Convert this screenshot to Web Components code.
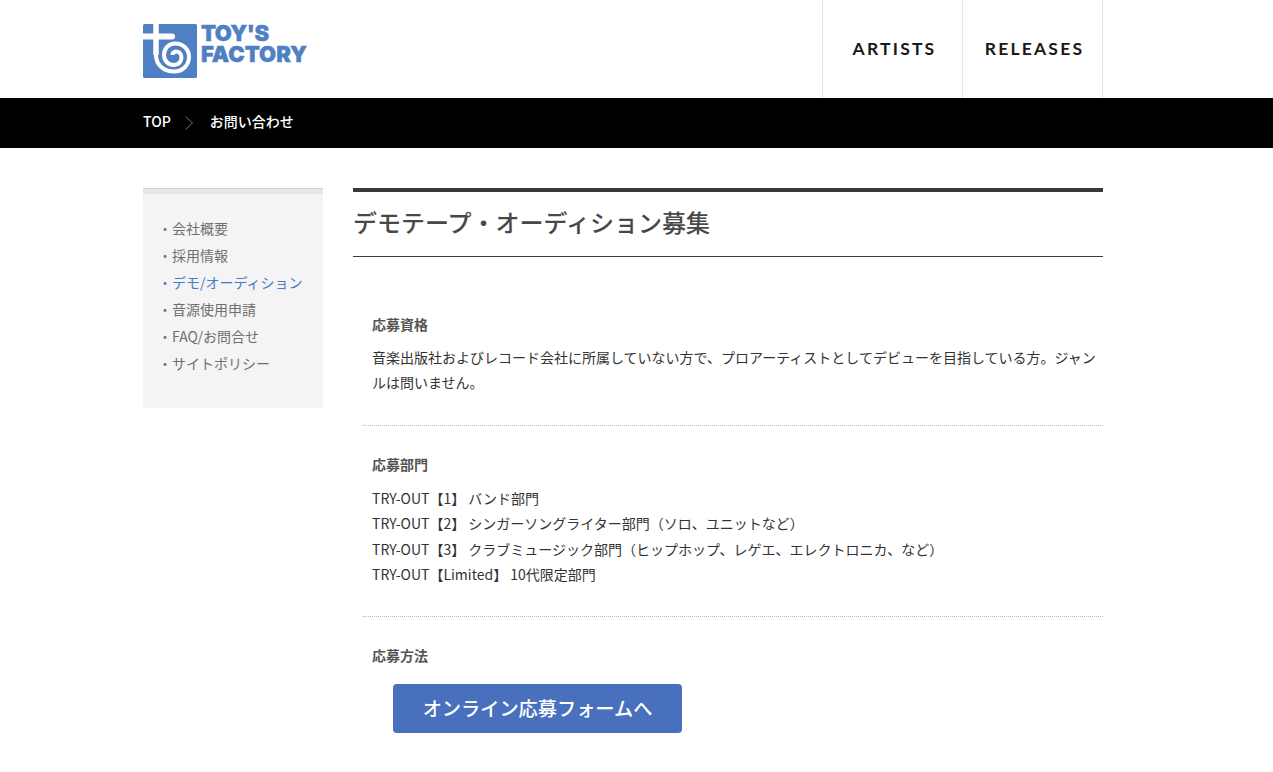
<!DOCTYPE html>
<html lang="ja">
<head>
<meta charset="utf-8">
<title>デモテープ・オーディション募集</title>
<style>
  html, body { margin: 0; padding: 0; background: #fff; }
  body { font-family: "Noto Sans CJK JP", "Noto Sans", sans-serif; color: #333; overflow: hidden; }
</style>
</head>
<body>
<site-header></site-header>
<bread-crumb current="お問い合わせ"></bread-crumb>
<page-body>
  <side-menu slot="side"></side-menu>
  <div slot="main">
    <page-title>デモテープ・オーディション募集</page-title>
    <info-block heading="応募資格" first>
      音楽出版社およびレコード会社に所属していない方で、プロアーティストとしてデビューを目指している方。ジャンルは問いません。
    </info-block>
    <info-block heading="応募部門">
      TRY-OUT【1】 バンド部門<br>
      TRY-OUT【2】 シンガーソングライター部門（ソロ、ユニットなど）<br>
      TRY-OUT【3】 クラブミュージック部門（ヒップホップ、レゲエ、エレクトロニカ、など）<br>
      TRY-OUT【Limited】 10代限定部門
    </info-block>
    <info-block heading="応募方法" last>
      <form-button>オンライン応募フォームへ</form-button>
    </info-block>
  </div>
</page-body>

<script>
class SiteHeader extends HTMLElement {
  constructor() {
    super();
    this.attachShadow({ mode: 'open' });
    this.shadowRoot.innerHTML = `
      <style>
        :host { display: block; height: 98px; background: #fff; }
        .inner { width: 960px; height: 98px; margin-left: 143px; display: flex; align-items: stretch; justify-content: space-between; }
        .logo { display: flex; align-items: flex-start; gap: 4px; padding-top: 24px; text-decoration: none; }
        .logo svg { display: block; }
        .word { display: flex; flex-direction: column; gap: 1px; margin-top: -1px; }
        .word span { display: block; font: 900 22px/20px "Inter", sans-serif; color: #5080c4; -webkit-text-stroke: .4px #5080c4; }
        .word span:first-child { letter-spacing: -.5px; }
        nav { display: flex; }
        a.item { box-sizing: border-box; width: 140px; padding: 0 0 2px 4px; display: flex; align-items: center; justify-content: center; border-left: 1px solid #e4e4e4; font: 700 17.5px "Lato", sans-serif; letter-spacing: 2.2px; color: #1a1a1a; text-decoration: none; }
        a.item:last-child { width: 141px; border-right: 1px solid #e4e4e4; }
      </style>
      <div class="inner">
        <a class="logo" href="#">
          <svg width="54" height="54" viewBox="0 0 54 54">
            <rect width="54" height="54" rx="1.5" fill="#5080c4"/>
            <path d="M0 12.5H29" fill="none" stroke="#fff" stroke-width="6" stroke-linecap="round"/>
            <path d="M13 0V31" fill="none" stroke="#fff" stroke-width="5.5"/>
            <path d="M13 31C13 41 21 47.5 31 47.5C40 47.5 46 41 46 33C46 25 40 19.5 32 19.5C25.5 19.5 21 24.5 21 31C21 37 25.5 41 31 41C35.5 41 38.5 37.5 38.5 33.5C38.5 30 36 27.5 33 27.5C31 27.5 29.5 29 29.5 31" fill="none" stroke="#fff" stroke-width="4"/>
          </svg>
          <span class="word"><span>TOY'S</span><span>FACTORY</span></span>
        </a>
        <nav>
          <a class="item" href="#">ARTISTS</a>
          <a class="item" href="#">RELEASES</a>
        </nav>
      </div>`;
  }
}

class BreadCrumb extends HTMLElement {
  constructor() {
    super();
    this.attachShadow({ mode: 'open' });
    this.shadowRoot.innerHTML = `
      <style>
        :host { display: block; height: 50px; background: #000; }
        .inner { width: 960px; height: 46px; margin-left: 143px; display: flex; align-items: center; font-size: 14px; font-weight: 500; color: #fff; }
        svg { display: block; margin: 4px 16px 0 13px; }
      </style>
      <div class="inner">
        <span>TOP</span>
        <svg width="10" height="14" viewBox="0 0 10 14"><path d="M1.5 .5L8.5 7L1.5 13.5" fill="none" stroke="#777" stroke-width="1"/></svg>
        <span id="current"></span>
      </div>`;
  }
  connectedCallback() {
    this.shadowRoot.querySelector('#current').textContent = this.getAttribute('current');
  }
}

class PageBody extends HTMLElement {
  constructor() {
    super();
    this.attachShadow({ mode: 'open' });
    this.shadowRoot.innerHTML = `
      <style>
        :host { display: block; }
        .inner { width: 960px; margin-left: 143px; padding-top: 40px; display: grid; grid-template-columns: 180px 750px; column-gap: 30px; align-items: start; }
      </style>
      <div class="inner">
        <slot name="side"></slot>
        <slot name="main"></slot>
      </div>`;
  }
}

class SideMenu extends HTMLElement {
  constructor() {
    super();
    const items = ['会社概要', '採用情報', 'デモ/オーディション', '音源使用申請', 'FAQ/お問合せ', 'サイトポリシー'];
    this.attachShadow({ mode: 'open' });
    this.shadowRoot.innerHTML = `
      <style>
        :host { display: block; box-sizing: border-box; height: 220px; background: #f4f4f4; border-top: 1px solid #d2d2d2; }
        .cap { height: 5px; background: #e6e6e6; }
        ul { list-style: none; margin: 0; padding: 21px 0 0 15px; }
        li { height: 27px; line-height: 27px; font-size: 14px; color: #707070; white-space: nowrap; }
        li.on { color: #4b78c6; }
      </style>
      <div class="cap"></div>
      <ul>${items.map((t, i) => `<li class="${i === 2 ? 'on' : ''}">・${t}</li>`).join('')}</ul>`;
  }
}

class PageTitle extends HTMLElement {
  constructor() {
    super();
    this.attachShadow({ mode: 'open' });
    this.shadowRoot.innerHTML = `
      <style>
        :host { display: block; box-sizing: border-box; height: 69px; border-top: 4px solid #3a3a3a; border-bottom: 1px solid #3a3a3a; }
        h1 { margin: 0; font-size: 24px; font-weight: 500; line-height: 34px; padding-top: 13px; color: #484848; }
      </style>
      <h1><slot></slot></h1>`;
  }
}

class InfoBlock extends HTMLElement {
  constructor() {
    super();
    this.attachShadow({ mode: 'open' });
    this.shadowRoot.innerHTML = `
      <style>
        :host { display: block; margin-left: 10px; padding: 0 0 29px 9px; border-bottom: 1px dotted #bbb; }
        :host([first]) { margin-top: 29px; padding-bottom: 29.5px; }
        :host([last]) { border-bottom: none; padding-bottom: 0; }
        h2 { margin: 0; padding-top: 28px; font-size: 14px; font-weight: 700; line-height: 20px; color: #555; }
        .text { margin-top: 11.5px; font-size: 14px; line-height: 25.4px; color: #333; }
        :host([first]) .text { margin-top: 11px; }
      </style>
      <h2 id="h"></h2>
      <div class="text"><slot></slot></div>`;
  }
  connectedCallback() {
    this.shadowRoot.querySelector('#h').textContent = this.getAttribute('heading');
  }
}

class FormButton extends HTMLElement {
  constructor() {
    super();
    this.attachShadow({ mode: 'open' });
    this.shadowRoot.innerHTML = `
      <style>
        :host { display: block; margin: 19px 0 0 21px; width: 289px; }
        a { display: flex; align-items: center; justify-content: center; height: 49px; border-radius: 4px; background: #4870bc; color: #fff; font-size: 19.2px; font-weight: 500; text-decoration: none; }
      </style>
      <a href="#"><slot></slot></a>`;
  }
}

customElements.define('site-header', SiteHeader);
customElements.define('bread-crumb', BreadCrumb);
customElements.define('page-body', PageBody);
customElements.define('side-menu', SideMenu);
customElements.define('page-title', PageTitle);
customElements.define('info-block', InfoBlock);
customElements.define('form-button', FormButton);
</script>
</body>
</html>
